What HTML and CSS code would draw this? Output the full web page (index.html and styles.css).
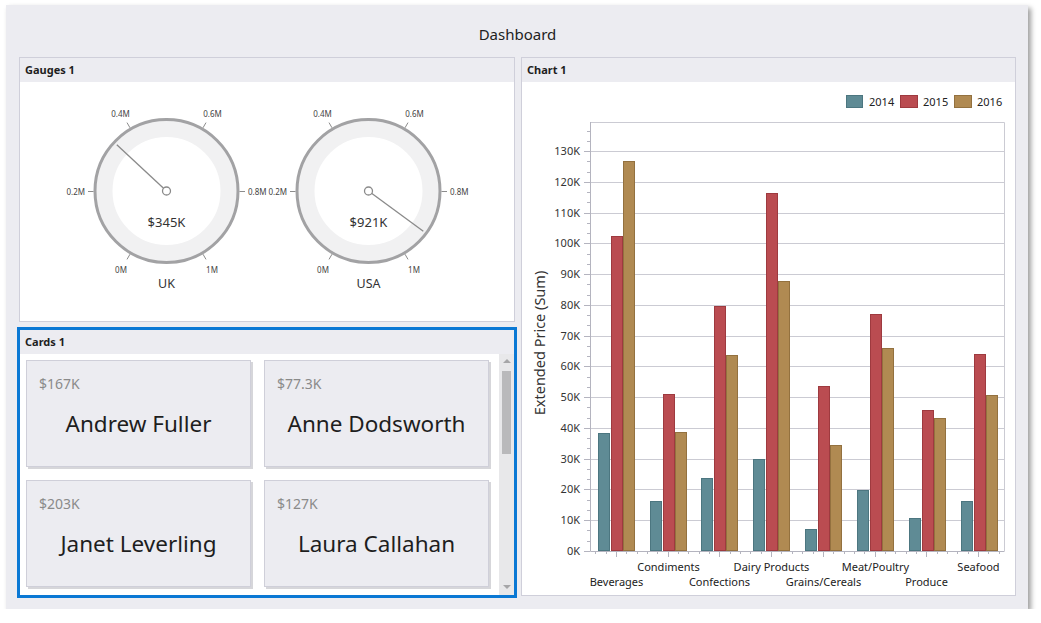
FILE: index.html
```html
<!DOCTYPE html>
<html lang="en">
<head>
<meta charset="utf-8">
<title>Dashboard</title>
<link rel="stylesheet" href="styles.css">
</head>
<body>
<div class="window">
  <div class="title">Dashboard</div>
  <div class="layout">
    <section class="panel gauges">
      <div class="panel-head">Gauges 1</div>
      <div class="panel-body">
        <svg class="gauge-svg" width="494" height="239" viewBox="20 82 494 239">
          <g class="gauge">
            <circle cx="166.5" cy="191" r="62.5" class="band"/>
            <circle cx="166.5" cy="191" r="71.5" class="ring"/>
            <path class="tick" d="M130 254.2L127 259.4M93.5 191.5H88M130 127.8L127 122.6M203 127.8L206 122.6M239.5 191.5H245M203 254.2L206 259.4"/>
            <text x="121" y="269" class="lbl">0M</text>
            <text x="85" y="191" class="lbl end">0.2M</text>
            <text x="120.5" y="113" class="lbl">0.4M</text>
            <text x="212.5" y="113" class="lbl">0.6M</text>
            <text x="248" y="191" class="lbl start">0.8M</text>
            <text x="212" y="269" class="lbl">1M</text>
            <line x1="166.5" y1="191" x2="116.8" y2="144.8" class="needle"/>
            <circle cx="166.5" cy="191" r="4" class="hub"/>
            <text x="166.5" y="222" class="val">$345K</text>
            <text x="166.5" y="283" class="name">UK</text>
          </g>
          <g class="gauge">
            <circle cx="368.5" cy="191" r="62.5" class="band"/>
            <circle cx="368.5" cy="191" r="71.5" class="ring"/>
            <path class="tick" d="M332 254.2L329 259.4M295.5 191.5H290M332 127.8L329 122.6M405 127.8L408 122.6M441.5 191.5H447M405 254.2L408 259.4"/>
            <text x="323" y="269" class="lbl">0M</text>
            <text x="287" y="191" class="lbl end">0.2M</text>
            <text x="322.5" y="113" class="lbl">0.4M</text>
            <text x="414.5" y="113" class="lbl">0.6M</text>
            <text x="450" y="191" class="lbl start">0.8M</text>
            <text x="414" y="269" class="lbl">1M</text>
            <line x1="368.5" y1="191" x2="423.3" y2="231.3" class="needle"/>
            <circle cx="368.5" cy="191" r="4" class="hub"/>
            <text x="368.5" y="222" class="val">$921K</text>
            <text x="368.5" y="283" class="name">USA</text>
          </g>
        </svg>
      </div>
    </section>

    <section class="panel chart">
      <div class="panel-head">Chart 1</div>
      <div class="panel-body">
        <svg class="chart-svg" width="493" height="513" viewBox="522 82 493 513">
          <!-- legend -->
          <rect x="846.5" y="95.5" width="16" height="12" class="s14"/>
          <text x="869" y="106" class="leg">2014</text>
          <rect x="900.5" y="95.5" width="17" height="12" class="s15"/>
          <text x="923" y="106" class="leg">2015</text>
          <rect x="954.5" y="95.5" width="17" height="12" class="s16"/>
          <text x="977" y="106" class="leg">2016</text>

          <!-- plot frame & grid -->
          <path class="gridlines" d="M590 122.5H1004.5V551M590 520.5H1004M590 489.5H1004M590 459.5H1004M590 428.5H1004M590 397.5H1004M590 366.5H1004M590 336.5H1004M590 305.5H1004M590 274.5H1004M590 243.5H1004M590 213.5H1004M590 182.5H1004M590 151.5H1004"/>
          <path class="axis" d="M590.5 122V551.5H1004.5"/>
          <path class="axis" d="M584 551.5h6M584 520.5h6M584 489.5h6M584 459.5h6M584 428.5h6M584 397.5h6M584 366.5h6M584 336.5h6M584 305.5h6M584 274.5h6M584 243.5h6M584 213.5h6M584 182.5h6M584 151.5h6"/>
          <path class="axis" d="M587 541.5h3M587 530.5h3M587 510.5h3M587 500.5h3M587 479.5h3M587 469.5h3M587 448.5h3M587 438.5h3M587 418.5h3M587 407.5h3M587 387.5h3M587 377.5h3M587 356.5h3M587 346.5h3M587 325.5h3M587 315.5h3M587 295.5h3M587 284.5h3M587 264.5h3M587 254.5h3M587 233.5h3M587 223.5h3M587 202.5h3M587 192.5h3M587 172.5h3M587 161.5h3M587 141.5h3M587 131.5h3"/>
          <path class="axis" d="M616.5 551v6M668.5 551v6M719.5 551v6M771.5 551v6M823.5 551v6M875.5 551v6M926.5 551v6M978.5 551v6"/>
          <path class="axis" d="M595.5 551v3M606.5 551v3M626.5 551v3M637.5 551v3M647.5 551v3M657.5 551v3M678.5 551v3M688.5 551v3M699.5 551v3M709.5 551v3M730.5 551v3M740.5 551v3M750.5 551v3M761.5 551v3M781.5 551v3M792.5 551v3M802.5 551v3M813.5 551v3M833.5 551v3M844.5 551v3M854.5 551v3M864.5 551v3M885.5 551v3M895.5 551v3M906.5 551v3M916.5 551v3M937.5 551v3M947.5 551v3M957.5 551v3M968.5 551v3M988.5 551v3M999.5 551v3"/>

          <!-- y labels -->
          <g class="ylbl">
            <text x="580" y="555">0K</text>
            <text x="580" y="524">10K</text>
            <text x="580" y="493">20K</text>
            <text x="580" y="463">30K</text>
            <text x="580" y="432">40K</text>
            <text x="580" y="401">50K</text>
            <text x="580" y="370">60K</text>
            <text x="580" y="340">70K</text>
            <text x="580" y="309">80K</text>
            <text x="580" y="278">90K</text>
            <text x="580" y="247">100K</text>
            <text x="580" y="217">110K</text>
            <text x="580" y="186">120K</text>
            <text x="580" y="155">130K</text>
          </g>
          <text class="ytitle" x="539" y="343" transform="rotate(-90 539 343)">Extended Price (Sum)</text>

          <!-- bars -->
          <g class="s14">
            <rect x="598.5" y="433.5" width="11" height="117"/>
            <rect x="650.5" y="501.5" width="11" height="49"/>
            <rect x="701.5" y="478.5" width="11" height="72"/>
            <rect x="753.5" y="459.5" width="11" height="91"/>
            <rect x="805.5" y="529.5" width="11" height="21"/>
            <rect x="857.5" y="490.5" width="11" height="60"/>
            <rect x="909.5" y="518.5" width="11" height="32"/>
            <rect x="961.5" y="501.5" width="11" height="49"/>
          </g>
          <g class="s15">
            <rect x="611.5" y="236.5" width="11" height="314"/>
            <rect x="663.5" y="394.5" width="11" height="156"/>
            <rect x="714.5" y="306.5" width="11" height="244"/>
            <rect x="766.5" y="193.5" width="11" height="357"/>
            <rect x="818.5" y="386.5" width="11" height="164"/>
            <rect x="870.5" y="314.5" width="11" height="236"/>
            <rect x="922.5" y="410.5" width="11" height="140"/>
            <rect x="974.5" y="354.5" width="11" height="196"/>
          </g>
          <g class="s16">
            <rect x="623.5" y="161.5" width="11" height="389"/>
            <rect x="675.5" y="432.5" width="11" height="118"/>
            <rect x="726.5" y="355.5" width="11" height="195"/>
            <rect x="778.5" y="281.5" width="11" height="269"/>
            <rect x="830.5" y="445.5" width="11" height="105"/>
            <rect x="882.5" y="348.5" width="11" height="202"/>
            <rect x="934.5" y="418.5" width="11" height="132"/>
            <rect x="986.5" y="395.5" width="11" height="155"/>
          </g>

          <!-- x labels -->
          <g class="xlbl">
            <text x="616.5" y="586">Beverages</text>
            <text x="668.5" y="571">Condiments</text>
            <text x="719.5" y="586">Confections</text>
            <text x="771.5" y="571">Dairy Products</text>
            <text x="823.5" y="586">Grains/Cereals</text>
            <text x="875.5" y="571">Meat/Poultry</text>
            <text x="926.5" y="586">Produce</text>
            <text x="978.5" y="571">Seafood</text>
          </g>
        </svg>
      </div>
    </section>

    <section class="panel cards selected">
      <div class="panel-head">Cards 1</div>
      <div class="panel-body cards-body">
        <div class="card-grid">
          <div class="card"><div class="card-val">$167K</div><div class="card-name">Andrew Fuller</div></div>
          <div class="card"><div class="card-val">$77.3K</div><div class="card-name">Anne Dodsworth</div></div>
          <div class="card"><div class="card-val">$203K</div><div class="card-name">Janet Leverling</div></div>
          <div class="card"><div class="card-val">$127K</div><div class="card-name">Laura Callahan</div></div>
        </div>
        <div class="scrollbar">
          <div class="arrow up"></div>
          <div class="track"><div class="thumb"></div></div>
          <div class="arrow down"></div>
        </div>
      </div>
    </section>
  </div>
</div>
</body>
</html>
```

FILE: styles.css
```css
html, body {
  margin: 0;
  padding: 0;
  background: #ffffff;
}

body {
  font-family: "Noto Sans", "Open Sans", sans-serif;
  color: #222;
}

.window {
  box-sizing: border-box;
  margin: 5px 0 0 6px;
  width: 1022px;
  height: 604px;
  background: #ececf1;
  padding: 0 12px 13px 13px;
  box-shadow: 3px 3px 5px rgba(0, 0, 0, 0.38);
  display: flex;
  flex-direction: column;
}

.title {
  height: 52px;
  box-sizing: border-box;
  padding-top: 20px;
  text-align: center;
  font-size: 15px;
  line-height: 18px;
  color: #222;
}

.layout {
  display: grid;
  grid-template-columns: 496px 495px;
  grid-template-rows: 265px 267px;
  column-gap: 6px;
  row-gap: 7px;
}

.panel {
  box-sizing: border-box;
  border: 1px solid #cfcfda;
  background: #ffffff;
  display: flex;
  flex-direction: column;
  overflow: hidden;
}

.panel.chart {
  grid-column: 2;
  grid-row: 1 / span 2;
}

.panel.gauges {
  grid-column: 1;
  grid-row: 1;
}

.panel.cards {
  grid-column: 1;
  grid-row: 2;
}

.panel.selected {
  border-color: #0a78d4;
  outline: 2px solid #0a78d4;
  overflow: visible;
}

.panel-head {
  height: 24px;
  flex: none;
  background: #ececf1;
  font-weight: 700;
  font-size: 11px;
  line-height: 24px;
  padding-left: 5px;
  color: #1e1e1e;
}

.panel-body {
  flex: 1;
  min-height: 0;
  background: #ffffff;
  position: relative;
}

.gauge-svg, .chart-svg {
  display: block;
  font-family: "Noto Sans", "Open Sans", sans-serif;
}

/* gauges */
.band {
  fill: none;
  stroke: #f1f1f2;
  stroke-width: 17;
}

.ring {
  fill: none;
  stroke: #a2a2a4;
  stroke-width: 3;
}

.tick {
  stroke: #8c8c8c;
  stroke-width: 1;
  fill: none;
}

.lbl {
  font-size: 8px;
  fill: #444;
  text-anchor: middle;
  dominant-baseline: central;
}

.lbl.end {
  text-anchor: end;
}

.lbl.start {
  text-anchor: start;
}

.needle {
  stroke: #8a8a8a;
  stroke-width: 1.3;
}

.hub {
  fill: #ffffff;
  stroke: #8a8a8a;
  stroke-width: 1.3;
}

.val {
  font-size: 13px;
  fill: #333;
  text-anchor: middle;
  dominant-baseline: central;
}

.name {
  font-size: 12.5px;
  fill: #333;
  text-anchor: middle;
  dominant-baseline: central;
}

/* chart */
.s14 { fill: #5f8b95; stroke: #4c7680; stroke-width: 1; }
.s15 { fill: #ba4c51; stroke: #9e3a3f; stroke-width: 1; }
.s16 { fill: #b08a52; stroke: #93713f; stroke-width: 1; }

.leg {
  font-size: 11px;
  fill: #222;
  stroke: none;
}

.gridlines {
  fill: none;
  stroke: #cbcbd3;
  stroke-width: 1;
}

.axis {
  fill: none;
  stroke: #b4b4bf;
  stroke-width: 1;
}

.ylbl text {
  font-size: 11px;
  fill: #333;
  text-anchor: end;
}

.ytitle {
  font-size: 14.5px;
  fill: #333;
  text-anchor: middle;
  dominant-baseline: central;
}

.xlbl text {
  font-size: 11px;
  fill: #222;
  text-anchor: middle;
}

/* cards */
.cards-body {
  display: flex;
  overflow: hidden;
}

.card-grid {
  flex: 1;
  display: grid;
  grid-template-columns: 225px 225px;
  grid-auto-rows: 107px;
  column-gap: 13px;
  row-gap: 13px;
  padding: 6px 0 0 6px;
  overflow: hidden;
}

.card {
  box-sizing: border-box;
  background: #ececf1;
  border: 1px solid #cfcfd9;
  box-shadow: 2px 2px 0 #d6d6da;
  padding: 13px 12px 0 12px;
  display: flex;
  flex-direction: column;
}

.card-val {
  font-size: 14px;
  line-height: 19px;
  color: #8a8a8a;
}

.card-name {
  margin-top: 16px;
  font-size: 22.5px;
  line-height: 30px;
  text-align: center;
  color: #1e1e1e;
}

.scrollbar {
  flex: none;
  width: 15px;
  background: #e8e8ea;
  display: flex;
  flex-direction: column;
  align-items: center;
}

.arrow {
  flex: none;
  width: 0;
  height: 0;
  border-left: 4px solid transparent;
  border-right: 4px solid transparent;
}

.arrow.up {
  margin-top: 5px;
  border-bottom: 4px solid #a6a6a8;
}

.arrow.down {
  margin-bottom: 6px;
  border-top: 4px solid #a6a6a8;
}

.track {
  flex: 1;
  width: 100%;
  display: flex;
  justify-content: center;
  padding-top: 8px;
}

.thumb {
  width: 9px;
  height: 83px;
  background: #b9b9bb;
}
```
